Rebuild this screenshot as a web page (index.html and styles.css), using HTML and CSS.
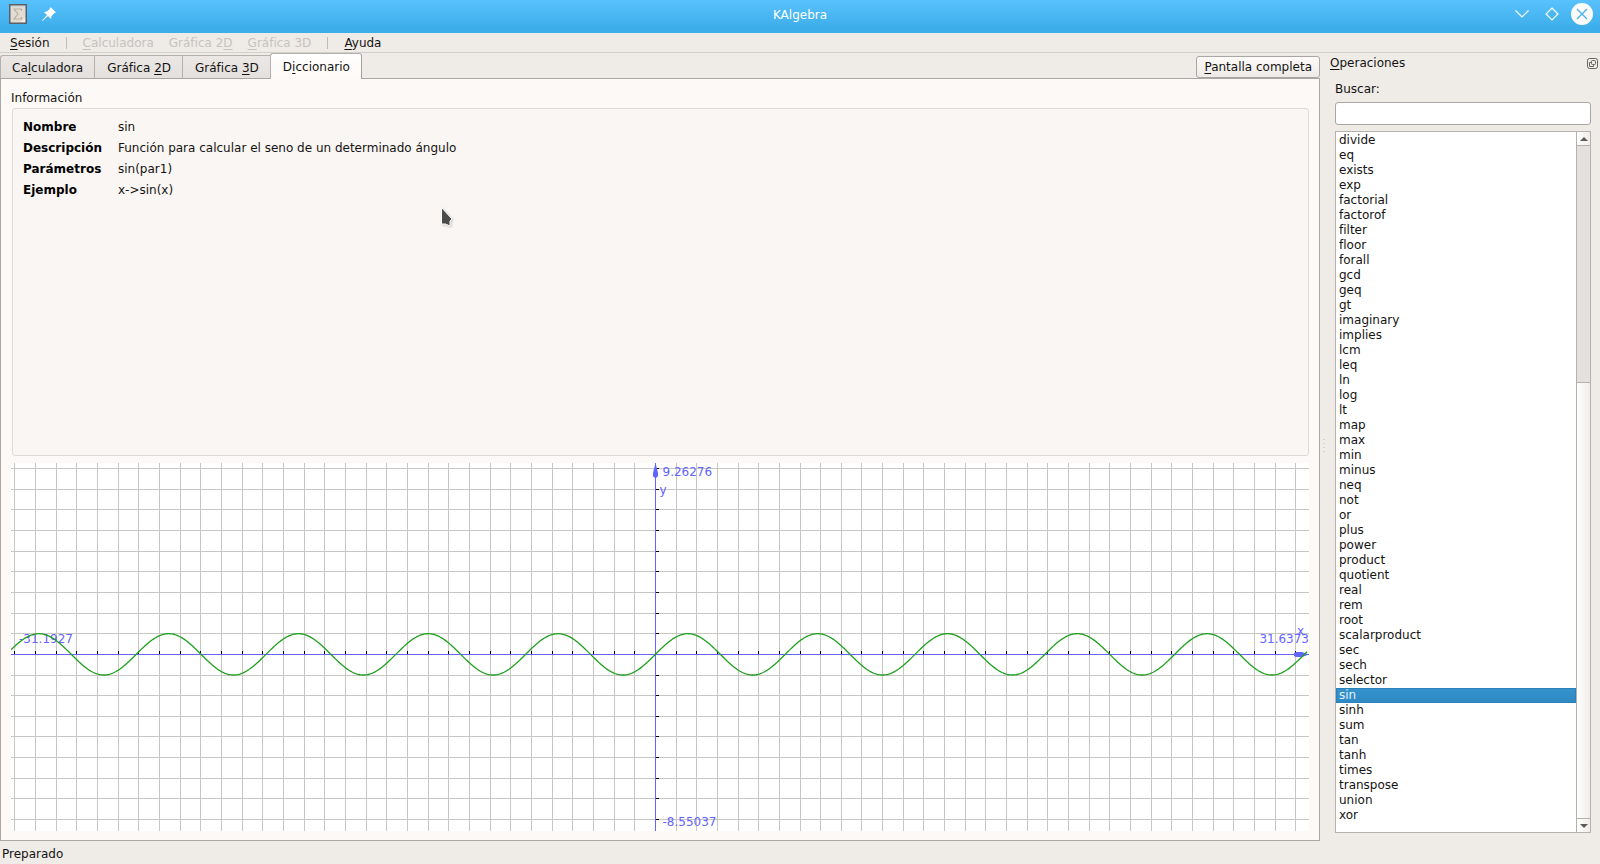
FILE: index.html
```
<!DOCTYPE html>
<html lang="es">
<head>
<meta charset="utf-8">
<title>KAlgebra</title>
<link rel="stylesheet" href="styles.css">
</head>
<body>
<header class="titlebar">
  <div class="title-left">
    <svg width="18" height="20" viewBox="0 0 18 20" aria-hidden="true">
      <rect x="0.75" y="0.75" width="16.5" height="18.5" fill="#e3dcd5" stroke="#5a6064" stroke-width="1.5"/>
      <path d="M2 2.5H16" stroke="#c9d8de"/>
      <path d="M12.5 7V5H5l4 5-4 5h7.500V13" fill="none" stroke="#b9b09c" stroke-width="1.200"/>
      <path d="M12 18l4-4v4z" fill="#f6f3ef"/>
    </svg>
    <svg width="14" height="14" viewBox="0 0 14 14" aria-hidden="true">
      <path d="M8.500 0L14 5.500 12.500 6 9.500 9 9 12 6 9 0.500 14 0 13.500 5 8 2 5 5 4.500 8 1.500z" fill="#fff"/>
    </svg>
  </div>
  <h1 class="title">KAlgebra</h1>
  <div class="title-right">
    <button class="win" aria-label="Minimizar"><svg width="14" height="8" viewBox="0 0 14 8"><path d="M0.500 0.500L7 7l6.500-6.500" fill="none" stroke="#fff" stroke-width="1.200"/></svg></button>
    <button class="win" aria-label="Maximizar"><svg width="14" height="14" viewBox="0 0 14 14"><path d="M7 1l6 6-6 6-6-6z" fill="none" stroke="#fff" stroke-width="1.200"/></svg></button>
    <button class="win" aria-label="Cerrar"><svg width="22" height="22" viewBox="0 0 22 22"><circle cx="11" cy="11" r="11" fill="#fcfcfc"/><path d="M6 6l10 10M16 6L6 16" stroke="#45b0ea" stroke-width="1.300"/></svg></button>
  </div>
</header>
<nav class="menubar">
  <button><u>S</u>esión</button>
  <i class="sep"></i>
  <button disabled><u>C</u>alculadora</button>
  <button disabled>Gráfica 2<u>D</u></button>
  <button disabled><u>G</u>ráfica 3D</button>
  <i class="sep"></i>
  <button><u>A</u>yuda</button>
</nav>
<div class="workspace">
  <main class="main">
    <div class="tabbar">
      <div class="tabs" role="tablist">
        <button class="tab" role="tab">Ca<u>l</u>culadora</button>
        <button class="tab" role="tab">Gráfica <u>2</u>D</button>
        <button class="tab" role="tab">Gráfica <u>3</u>D</button>
        <button class="tab active" role="tab" aria-selected="true">D<u>i</u>ccionario</button>
      </div>
      <button class="fullscreen"><u>P</u>antalla completa</button>
    </div>
    <section class="page">
      <h2 class="group-title">Información</h2>
      <div class="info">
        <dl class="fields">
          <dt>Nombre</dt><dd>sin</dd>
          <dt>Descripción</dt><dd>Función para calcular el seno de un determinado ángulo</dd>
          <dt>Parámetros</dt><dd>sin(par1)</dd>
          <dt>Ejemplo</dt><dd>x-&gt;sin(x)</dd>
        </dl>
      </div>
      <div class="graph"><svg id="plot" class="plot" role="img" aria-label="sin(x)"></svg></div>
    </section>
  </main>
  <div class="splitter"></div>
  <aside class="dock">
    <div class="dock-head">
      <h2 class="dock-title"><u>O</u>peraciones</h2>
      <button class="float" aria-label="Flotar"><svg width="11" height="11" viewBox="0 0 11 11" fill="none" stroke="#666461"><rect x="0.500" y="0.500" width="10" height="10" rx="2"/><rect x="4.500" y="2.500" width="4" height="4" rx="1"/><path d="M4.500 4.500h-2v4h4v-2"/></svg></button>
    </div>
    <div class="dock-body">
      <label class="search-label" for="search">Buscar:</label>
      <input class="search" id="search" type="text">
      <div class="listbox">
        <ul class="items" role="listbox" aria-label="Operaciones">
          <li role="option">divide</li><li role="option">eq</li><li role="option">exists</li><li role="option">exp</li><li role="option">factorial</li><li role="option">factorof</li><li role="option">filter</li><li role="option">floor</li><li role="option">forall</li><li role="option">gcd</li><li role="option">geq</li><li role="option">gt</li><li role="option">imaginary</li><li role="option">implies</li><li role="option">lcm</li><li role="option">leq</li><li role="option">ln</li><li role="option">log</li><li role="option">lt</li><li role="option">map</li><li role="option">max</li><li role="option">min</li><li role="option">minus</li><li role="option">neq</li><li role="option">not</li><li role="option">or</li><li role="option">plus</li><li role="option">power</li><li role="option">product</li><li role="option">quotient</li><li role="option">real</li><li role="option">rem</li><li role="option">root</li><li role="option">scalarproduct</li><li role="option">sec</li><li role="option">sech</li><li role="option">selector</li><li role="option" class="selected" aria-selected="true">sin</li><li role="option">sinh</li><li role="option">sum</li><li role="option">tan</li><li role="option">tanh</li><li role="option">times</li><li role="option">transpose</li><li role="option">union</li><li role="option">xor</li>
        </ul>
        <div class="scrollbar">
          <button class="arrow up" aria-label="Subir"><svg width="8" height="4" viewBox="0 0 8 4"><path d="M0 4l4-4 4 4z" fill="#5a5957"/></svg></button>
          <div class="groove"></div>
          <div class="thumb"></div>
          <button class="arrow down" aria-label="Bajar"><svg width="8" height="4" viewBox="0 0 8 4"><path d="M0 0l4 4 4-4z" fill="#5a5957"/></svg></button>
        </div>
      </div>
    </div>
  </aside>
</div>
<footer class="status">Preparado</footer>
<svg class="pointer" width="14" height="22" viewBox="0 0 14 22" aria-hidden="true"><path d="M1.500 1.500v16.500h4l4.500 2v-5l2-2z" fill="#4a4a4a" stroke="#fff"/></svg>
<script src="plot.js"></script>
</body>
</html>
```
FILE: styles.css
```
* { box-sizing: border-box; }
body {
  margin: 0;
  height: 100vh;
  display: flex;
  flex-direction: column;
  background: #efebe7;
  color: #141312;
  font: 12px/15px "DejaVu Sans", sans-serif;
}
h1, h2, dl, dd, ul { margin: 0; padding: 0; font: inherit; }
button { font: inherit; color: inherit; border: 0; padding: 0; background: none; }
u { text-underline-offset: 2px; text-decoration-thickness: 1px; text-decoration-skip-ink: none; }

.titlebar {
  display: grid;
  grid-template-columns: 1fr auto 1fr;
  align-items: center;
  height: 33px;
  padding: 0 7px 5px 9px;
  background: linear-gradient(#58c1fe, #3daee9 85%, #3daee9);
  color: #fff;
}
.title { padding: 2px 2px 0 0; }
.title-left { display: flex; align-items: center; gap: 15px; }
.title-right { display: flex; align-items: center; justify-content: flex-end; gap: 16px; }
.title-right .win:last-child { margin-left: -4px; }
.win { display: flex; }

.menubar {
  display: flex;
  align-items: center;
  height: 20px;
  padding: 1px 0 0 10px;
  border-bottom: 1px solid #d3d0cc;
}
.menubar button { margin-right: 15px; }
.menubar button:disabled { color: #c6c3bf; }
.sep { width: 1px; height: 12px; margin: 0 16px 0 1px; background: #bfbcb8; }

.workspace { flex: 1; display: flex; min-height: 0; }
.main { flex: 1; display: flex; flex-direction: column; min-width: 0; }
.tabbar { display: flex; justify-content: space-between; align-items: flex-end; height: 25px; }
.tabs { display: flex; align-items: flex-end; }
.tab {
  height: 23px;
  padding: 2px 11px 0 12px;
  border: 1px solid #b5b1ae;
  border-right: 0;
  border-bottom: 0;
  background: linear-gradient(#ebe7e4, #e4e0dd);
}
.tab:first-child { padding-left: 11px; border-radius: 3px 0 0 0; }
.tab.active {
  height: 26px;
  margin-bottom: -1px;
  padding-bottom: 1px;
  border-right: 1px solid #a5a19e;
  border-radius: 3px 3px 0 0;
  background: linear-gradient(#fff, #fdf9f6);
  z-index: 1;
}
.fullscreen {
  height: 22px;
  padding: 1px 7px 0;
  border: 1px solid #aaa6a3;
  border-radius: 3px;
  background: linear-gradient(#fdfbfa, #edeae7);
}
.page {
  flex: 1;
  display: flex;
  flex-direction: column;
  min-height: 0;
  padding: 12px 10px 9px 10px;
  border: 1px solid #aaa6a3;
  background: #fdf9f6;
}
.info {
  flex: 348 1 348px;
  margin: 2px 0 7px 1px;
  padding: 11px 10px;
  border: 1px solid #dedad7;
  border-radius: 3px;
  background: #faf6f3;
}
.fields { display: grid; grid-template-columns: auto 1fr; column-gap: 16px; row-gap: 6px; }
.fields dt { font-weight: bold; color: #000; }
.graph { flex: 368 1 368px; min-height: 0; background: #fff; }
.plot { display: block; width: 100%; height: 100%; }
.grid { stroke: #c8c6c2; }
.axis { stroke: #6464ff; }
.tick { stroke: #000; }
.grid, .axis, .tick { shape-rendering: crispEdges; fill: none; }
.curve { fill: none; stroke: #1ea01e; stroke-width: 1.3; }
.arrowhead, .plot text { fill: #6464ff; }

.splitter {
  width: 7px;
  background: radial-gradient(circle, #d6d2ce 1px, transparent 1px) center / 4px 4px no-repeat;
  background-repeat: no-repeat;
  background-size: 2px 16px;
  background-image: repeating-linear-gradient(#d6d2ce 0 1px, transparent 1px 4px);
}
.dock { width: 273px; display: flex; flex-direction: column; }
.dock-head { display: flex; justify-content: space-between; align-items: center; padding: 3px 2px 0 3px; }
.float { display: flex; }
.dock-body { flex: 1; display: flex; flex-direction: column; min-height: 0; padding: 11px 9px 8px 8px; }
.search {
  height: 23px;
  margin: 5px 0 6px;
  padding: 2px 5px;
  border: 1px solid #aaa6a3;
  border-radius: 3px;
  background: #fff;
  font: inherit;
}
.listbox { flex: 1; display: flex; min-height: 0; border: 1px solid #b5b1ae; background: #fff; }
.items { flex: 1; padding-top: 1px; list-style: none; overflow: hidden; }
.items li { padding-left: 3px; }
.items .selected { background: linear-gradient(#3593cf, #2f89c2); color: #e6f1f8; box-shadow: inset 0 0 0 1px #2c82b8; }
.scrollbar { width: 14px; display: flex; flex-direction: column; border-left: 1px solid #b5b1ae; }
.arrow { display: flex; align-items: center; justify-content: center; height: 14px; background: linear-gradient(90deg, #fff, #efedea); }
.arrow.up { border-bottom: 1px solid #b5b1ae; }
.arrow.down { border-top: 1px solid #b5b1ae; }
.groove { flex: 236 1 0; background: #e3e1de; border-bottom: 1px solid #b5b1ae; }
.thumb { flex: 435 1 0; background: linear-gradient(90deg, #fff, #efedea); }

.status { height: 23px; padding: 6px 2px 0; }
.pointer { position: absolute; left: 440px; top: 206px; filter: drop-shadow(1px 1px 1px #0003); }
```
FILE: plot.js
```
const NS = "http://www.w3.org/2000/svg";
const plot = document.getElementById("plot");
const view = { left: -31.1927, right: 31.6373, top: 9.26276, bottom: -8.55037 };

function add(tag, attrs, text) {
  const el = document.createElementNS(NS, tag);
  for (const name in attrs) el.setAttribute(name, attrs[name]);
  if (text) el.textContent = text;
  plot.appendChild(el);
}

function draw() {
  plot.replaceChildren();
  const w = plot.clientWidth, h = plot.clientHeight;
  const sx = w / (view.right - view.left), sy = h / (view.top - view.bottom);
  const px = x => Math.floor((x - view.left) * sx) + 0.5;
  const py = y => Math.floor((view.top - y) * sy) + 0.5;
  let grid = "", ticks = "";
  for (let i = Math.ceil(view.left); i <= view.right; i++) {
    grid += `M${px(i)} 0V${h}`;
    if (i) ticks += `M${px(i)} ${py(0) - 3.5}v3`;
  }
  for (let i = Math.ceil(view.bottom); i <= view.top; i++) {
    grid += `M0 ${py(i)}H${w}`;
    if (i) ticks += `M${px(0) + 0.5} ${py(i)}h3`;
  }
  add("path", { class: "grid", d: grid });
  add("path", { class: "tick", d: ticks });
  add("path", { class: "axis", d: `M0 ${py(0)}H${w}M${px(0)} 0V${h}` });
  add("path", { class: "arrowhead", d: `M${px(0)} 0l2.500 10v3l-1 1.500h-3l-1-1.500v-3z` });
  add("path", { class: "arrowhead", d: `M${w} ${py(0)}l-7-2.500h-6l-2 1v3l2 1h6z` });
  add("text", { x: px(0) + 7, y: 13 }, "9.26276");
  add("text", { x: px(0) + 4, y: 31 }, "y");
  add("text", { x: px(0) + 7, y: h - 5 }, "-8.55037");
  add("text", { x: 8, y: py(0) - 12 }, "-31.1927");
  add("text", { x: w, y: py(0) - 12, "text-anchor": "end" }, "31.6373");
  add("text", { x: w - 12, y: py(0) - 20 }, "x");
  let curve = "";
  for (let x = 0; x <= w - 2; x++) {
    curve += (x ? "L" : "M") + x + " " + (view.top - Math.sin(view.left + x / sx)) * sy;
  }
  add("path", { class: "curve", d: curve });
}

draw();
addEventListener("resize", draw);
```
